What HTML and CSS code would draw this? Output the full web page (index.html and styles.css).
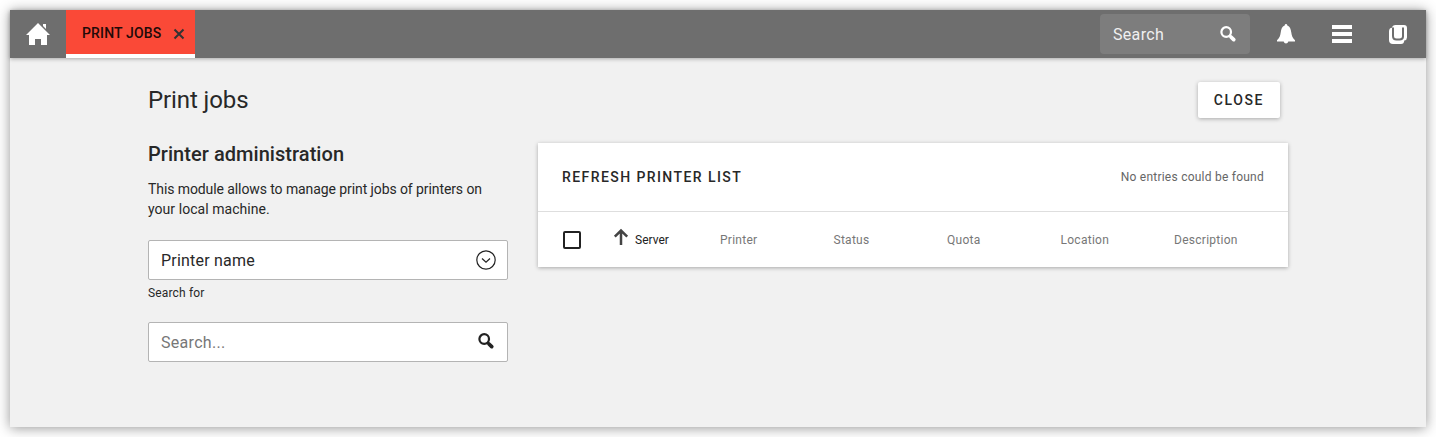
FILE: index.html
```html
<!DOCTYPE html>
<html lang="en">
<head>
<meta charset="utf-8">
<title>Print jobs</title>
<link rel="stylesheet" href="styles.css">
</head>
<body>
<div class="window">
  <header class="header">
    <a class="home"><svg width="24" height="22" viewBox="0 0 24 22"><path fill="#fff" d="M12 0 0 12h3v10h6v-6h6v6h6V12h3l-7.500-7.500z"/><path fill="#fff" d="M17 1h3v5l-3-3z"/></svg></a>
    <div class="tab">
      <span class="tab-label">Print jobs</span>
      <svg class="tab-close" width="12" height="12" viewBox="0 0 12 12"><path d="M1.500 1.500l9 9M10.500 1.500l-9 9" stroke="#333" stroke-width="2" fill="none"/></svg>
    </div>
    <div class="header-right">
      <div class="header-search"><span>Search</span>
        <svg width="18" height="18" viewBox="0 0 18 18"><g fill="none" stroke="#fff"><circle cx="7.200" cy="7" r="4.800" stroke-width="2.200"/><path d="M10.500 10.500l2 2" stroke-width="2.200"/><path d="M12 12l2.700 2.600" stroke-width="3.800" stroke-linecap="round"/></g></svg>
      </div>
      <a class="header-button"><svg width="20" height="20" viewBox="0 0 20 20"><path fill="#fff" d="M10 0c-.7 0-1.200.6-1.300 1.400C6 2.500 5.200 5 4.800 8 4.300 11.500 3.500 14.300 1 16.200V17.500h6.700c.3 1.100 1.200 2 2.300 2s2-.9 2.300-2H19v-1.300c-2.500-1.900-3.300-4.700-3.800-8.200-.4-3-1.200-5.500-3.900-6.600C11.200.6 10.700 0 10 0z"/></svg></a>
      <a class="header-button"><svg width="20" height="18" viewBox="0 0 20 18"><path fill="#fff" d="M0 0h20v4H0zM0 7h20v4H0zM0 14h20v4H0z"/></svg></a>
      <a class="header-button"><svg width="20" height="20" viewBox="0 0 20 20"><path fill="#fff" d="M7.500 1H16q3 0 3 3v9.500q0 2.500-2.700 3Q16 20 13 20H5Q1 20 1 16V7.500Q1 4 4 3.700 4.500 1 7.500 1z"/><path d="M5 3.500V12q0 3.500 3.500 3.500h3q3.500 0 3.500-3V3.500" fill="none" stroke="#6e6e6e" stroke-width="2"/></svg></a>
    </div>
  </header>
  <main class="content">
    <div class="title-row"><h1 class="title">Print jobs</h1><button class="close">Close</button></div>
    <div class="columns">
      <section class="side">
        <h2 class="side-title">Printer administration</h2>
        <p class="side-text">This module allows to manage print jobs of printers on<br><span class="last-line">your local machine.</span></p>
        <div class="field"><span>Printer name</span>
          <svg width="20" height="20" viewBox="0 0 20 20"><g fill="none" stroke="#222" stroke-width="1.200"><circle cx="10" cy="10" r="9.200"/><path d="M6 8.500l4 3.700 4-3.700"/></g></svg>
        </div>
        <div class="hint">Search for</div>
        <div class="field field-search"><span class="placeholder">Search...</span>
          <svg class="lens" width="18" height="18" viewBox="0 0 18 18"><g fill="none" stroke="#222"><circle cx="7.200" cy="7" r="4.800" stroke-width="2.200"/><path d="M10.500 10.500l2 2" stroke-width="2.200"/><path d="M12 12l2.700 2.600" stroke-width="3.800" stroke-linecap="round"/></g></svg>
        </div>
      </section>
      <section class="card">
        <div class="toolbar"><span class="refresh">Refresh printer list</span><span class="status">No entries could be found</span></div>
        <div class="grid-head">
          <span class="checkbox"></span>
          <span class="column sorted"><svg width="16" height="18" viewBox="0 0 16 18"><path d="M8 17V3M1.800 8.700L8 2.500l6.200 6.200" fill="none" stroke="#444" stroke-width="2.500"/></svg>Server</span>
          <span class="column">Printer</span>
          <span class="column">Status</span>
          <span class="column">Quota</span>
          <span class="column">Location</span>
          <span class="column">Description</span>
        </div>
      </section>
    </div>
  </main>
</div>
</body>
</html>
```
FILE: styles.css
```css
* { box-sizing: border-box; }
body { margin: 0; padding: 10px; background: #fff; font-family: Roboto, sans-serif; color: #282828; overflow: hidden; }
svg { display: block; flex: none; }
.window { height: 417px; background: #f1f1f1; box-shadow: 0 1px 12px rgba(0,0,0,.42); }
.header { display: flex; height: 48px; background: #6e6e6e; box-shadow: 0 1px 4px rgba(0,0,0,.3); }
.home { width: 56px; display: flex; align-items: center; justify-content: center; }
.tab { width: 128.500px; display: flex; align-items: center; padding: 3px 10px 0 16px; justify-content: space-between; background: #fa4937; border-bottom: 4px solid #fff; }
.tab-label { margin-top: -1px; font-size: 14px; font-weight: 500; letter-spacing: .150px; text-transform: uppercase; color: #220a08; white-space: nowrap; }
.header-right { margin-left: auto; display: flex; align-items: center; }
.header-search { width: 150px; height: 40px; margin-right: 8px; padding: 0 13px; display: flex; align-items: center; justify-content: space-between; border-radius: 4px; background: #7d7d7d; color: #f0f0f0; font-size: 16px; letter-spacing: .320px; }
.header-button { width: 56px; display: flex; justify-content: center; }
.content { width: 1140px; margin: 0 auto; }
.title-row { display: flex; align-items: center; justify-content: space-between; padding: 24px 8px 0 0; }
.title { margin: 0; font-size: 24px; line-height: 36px; font-weight: 400; letter-spacing: -.100px; }
.close { width: 82px; height: 36px; border: 0; border-radius: 2px; padding: 0; background: #fff; box-shadow: 0 1px 4px rgba(0,0,0,.3); font: 500 14px Roboto, sans-serif; letter-spacing: 1.600px; text-transform: uppercase; color: #282828; }
.columns { display: flex; gap: 30px; padding-top: 25px; }
.side { width: 360px; }
.side-title { margin: 0; font-size: 20px; line-height: 22px; font-weight: 500; letter-spacing: .050px; }
.side-text { margin: 14px 0 0; font-size: 14px; line-height: 20px; letter-spacing: -.090px; }
.last-line { letter-spacing: .050px; }
.field { height: 40px; margin-top: 21px; padding: 0 11px 0 12px; display: flex; align-items: center; justify-content: space-between; background: #fff; border: 1px solid #b4b4b4; border-radius: 2px; font-size: 16px; letter-spacing: .210px; }
.hint { margin-top: 5px; font-size: 12px; line-height: 16px; letter-spacing: .150px; }
.placeholder { color: #777; letter-spacing: .300px; }
.lens { margin: -2px 1px 0 0; }
.card { width: 750px; height: 124px; background: #fff; box-shadow: 0 1px 4px rgba(0,0,0,.3); }
.toolbar { height: 69px; display: flex; align-items: center; justify-content: space-between; padding: 0 24px; border-bottom: 1px solid #dedede; }
.refresh { font-size: 14px; font-weight: 500; letter-spacing: 1.420px; text-transform: uppercase; }
.status { font-size: 12px; letter-spacing: .240px; color: #666; }
.grid-head { height: 55px; display: grid; grid-template-columns: 50px 107px repeat(5, 113.500px); align-items: center; padding-left: 25px; }
.checkbox { width: 18px; height: 18px; border: 2px solid #222; border-radius: 2px; }
.column { font-size: 12px; letter-spacing: .270px; color: #777; white-space: nowrap; }
.sorted { display: flex; align-items: center; gap: 6px; color: #222; letter-spacing: 0; }
.sorted svg { margin-top: -6px; }
```
